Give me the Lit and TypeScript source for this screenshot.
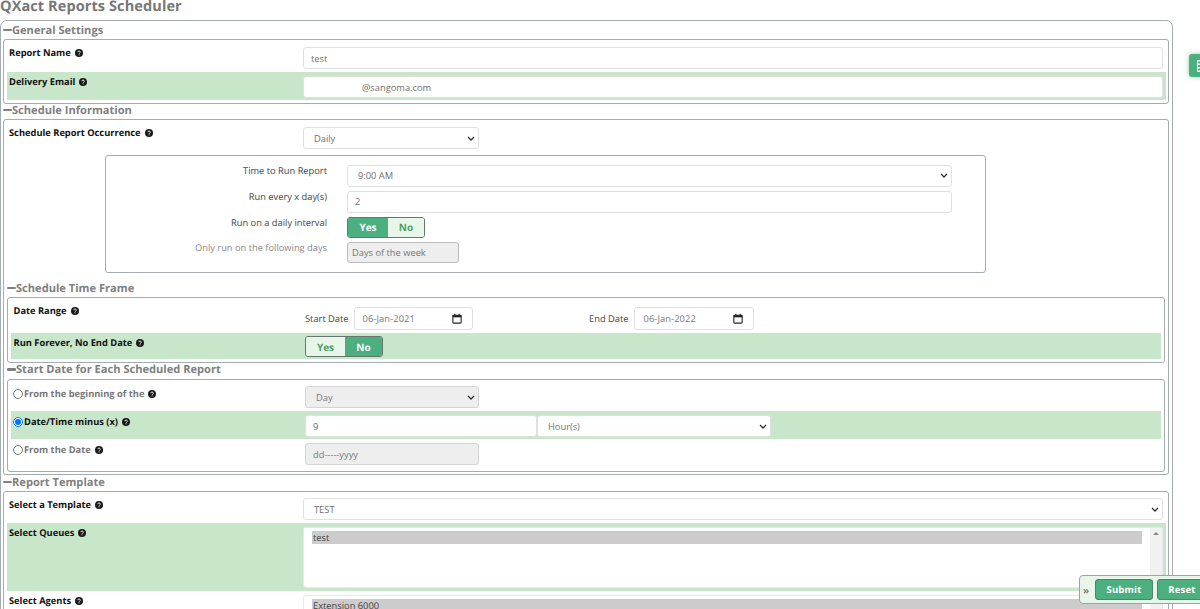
import { LitElement, html, css } from "lit";
import { customElement } from "lit/decorators.js";

const help = html`<svg class="help" viewBox="0 0 16 16"><circle cx="8" cy="8" r="8" fill="#1a1a1a"/><path d="M5.400 6.300C5.500 4.800 6.600 4 8.100 4c1.500 0 2.600.9 2.600 2.200 0 1-.6 1.500-1.300 2-.6.4-.8.7-.8 1.300" fill="none" stroke="#fff" stroke-width="1.700"/><rect x="7.100" y="10.600" width="1.900" height="1.900" fill="#fff"/></svg>`;
const cal = html`<svg class="cal" viewBox="0 0 12 12"><path d="M1 3a1 1 0 0 1 1-1h8a1 1 0 0 1 1 1v7.500a1 1 0 0 1-1 1H2a1 1 0 0 1-1-1z" fill="none" stroke="#222" stroke-width="1.300"/><rect x="1" y="2" width="10" height="2.600" fill="#222"/><rect x="2.800" y=".3" width="1.300" height="2" fill="#222"/><rect x="7.900" y=".3" width="1.300" height="2" fill="#222"/></svg>`;

@customElement("app-root")
export class AppRoot extends LitElement {
  static styles = css`
    :host { display: block; position: relative; height: 609px; overflow: hidden; background: #fff; text-rendering: geometricPrecision;
      font-family: "Open Sans", "Liberation Sans", sans-serif; font-size: 10px; color: #444; }
    * { box-sizing: border-box; }
    h1 { margin: 0; height: 20px; font-size: 14.500px; line-height: 13px; font-weight: 700; color: #777; letter-spacing: .1px; white-space: nowrap; }
    .outer { width: 1173px; height: 700px; border: 1px solid #a3abb3; border-radius: 7px; padding: 0 3.500px 0 2px; }
    .legend { display: flex; align-items: center; padding-bottom: 1px; font-size: 11.100px; font-weight: 700; color: #808080; white-space: nowrap; }
    .legend::before { content: ""; width: 9px; height: 2.500px; background: #808080; border-radius: 1px; flex: none; }
    .h18 { height: 18px; padding-bottom: 0; } .h15 { height: 15px; padding-bottom: 3px; }
    .box { border: 1px solid #a3abb3; border-radius: 3px; }
    .b1 { height: 65px; }
    .b2 { height: 356px; padding: 0 3px 0 3px; }
    .b4 { height: 200px; }
    .row { display: flex; margin: 0 1.500px 0 3px; padding: 4px 3px 2px 0; }
    .top { padding: 7px 3px 3px 0; }
    .first { margin: 0; padding-bottom: 0; }
    .tpl { padding-top: 6px; }
    .tpl .lab { margin-top: 0; }
    .green { background: #c8e6c9; }
    .lab { flex: none; width: 296px; padding-left: 2px; margin-top: -1px; display: flex; align-items: center; height: 14px; gap: 4px;
      font-size: 9.300px; font-weight: 700; color: #111; line-height: 14px; white-space: nowrap; }
    .help { width: 8px; height: 8px; flex: none; }
    .dimtext { color: #777; }
    input[type="text"], select { display: block; height: 22px; font: inherit; font-size: 9.300px; color: #707070; background-color: #fff;
      border: 1px solid #e0e0e0; border-radius: 3px; padding: 0 7px; outline: none; margin: 0; opacity: 1; }
    select { appearance: none; padding: 0 14px 0 10px;
      background-image: url("data:image/svg+xml,%3Csvg xmlns='http://www.w3.org/2000/svg' viewBox='0 0 8 5'%3E%3Cpath d='M1 1l3 3 3-3' fill='none' stroke='%23333' stroke-width='1.300'/%3E%3C/svg%3E");
      background-repeat: no-repeat; background-position: right 3px center; background-size: 8px 5px; }
    .full { flex: 1; min-width: 0; width: 100%; }
    input.email { padding-left: 58px; }
    .occ { width: 176px; }
    .panel { margin: 6px 0 0 98px; width: 881px; height: 118px; border: 1px solid #a3abb3; border-radius: 3px;
      display: grid; grid-template-columns: 221px 605px; column-gap: 20px; grid-template-rows: 22px 22px 21px 21px; row-gap: 4px; padding-top: 8.500px; align-content: start; }
    .plab { text-align: right; font-size: 9.300px; line-height: 14px; margin-top: -1px; color: #444; white-space: nowrap; }
    .plab.dim { color: #888; }
    .toggle { display: inline-flex; height: 21px; border: 1px solid #66756d; border-radius: 3px; overflow: hidden; font-size: 10px; font-weight: 700; }
    .toggle span { display: flex; align-items: center; justify-content: center; background: #e8f5e9; color: #4f9e5f; }
    .toggle span.on { background: #4caf7f; color: #fff; }
    .t1 { width: 78px; } .t2 { width: 78px; }
    .t1 span:first-child { width: 40px; } .t1 span:last-child { flex: 1; }
    .t2 span:first-child { width: 39px; } .t2 span:last-child { flex: 1; }
    input.dis, select.dis { background-color: #eee; border-color: #d4d4d4; color: #777; }
    input.days { width: 112px; padding: 0 4px; height: 21px; border-color: #bbb; }
    .l3 { height: 17px; margin-top: 7px; }
    .b3 { height: 66px; }
    .rw { display: flex; margin: 0 3px; }
    .rw .lab { width: 294px; padding-left: 2.500px; }
    .dates { padding-top: 9px; height: 34.500px; }
    .dates .lab { margin-top: -3px; }
    .date { width: 119.500px; height: 23px; border: 1px solid #e0e0e0; border-radius: 3px; display: flex; align-items: center; justify-content: space-between; padding: 0 10px 0 8px; color: #777; font-size: 9.300px; letter-spacing: .1px; }
    .cal { width: 10px; height: 11px; }
    .dl { font-size: 9.300px; color: #444; line-height: 23px; }
    .fields { display: flex; gap: 6px; }
    .start { gap: 5px; }
    .end { margin-left: 116px; }
    .forever { height: 26.500px; padding-top: 3.500px; }
    .forever .lab { margin-top: 0; }
    .l4 { height: 15.500px; padding-bottom: 3px; }
    .b5 { height: 93.500px; padding-top: 6.500px; }
    .rr { display: flex; margin: 0 3px; height: 28px; }
    .rr .lab { width: 294px; padding-left: 2px; gap: 4px; }
    .rr input[type="radio"] { width: 9.500px; height: 9.500px; margin: 0 -2.500px 0 0; flex: none; }
    .r1 { height: 25px; } .r1 .lab { margin-top: 1px; }
    .r2 { padding-top: 4px; } .r2 .lab { margin-top: 0; }
    .r3 { padding-top: 4px; } .r3 .lab { margin-top: 0; }
    .w174 { width: 174px; }
    .num { width: 232px; } .unit { width: 234px; }
    .l5 { height: 16px; padding-bottom: 2px; }
    .list { flex: 1; min-width: 0; background: #fff; border: 1px solid #e8e8e8; border-radius: 3px; height: 61px; display: flex; padding: 3px 0 0 8px; overflow: hidden; }
    .opts { flex: 1; min-width: 0; padding-right: 8px; }
    .opt { background: #ccc; height: 13px; line-height: 13px; font-size: 9.300px; color: #444; padding-left: 1px; }
    .sb { width: 12px; flex: none; margin-top: -3px; background: #f1f1f1; display: flex; justify-content: center; padding-top: 4px; }
    .sb i { width: 0; height: 0; border-left: 3px solid transparent; border-right: 3px solid transparent; border-bottom: 3px solid #888; }
    .pb3 { padding-bottom: 3px; }
    .dock { position: absolute; left: 1079px; top: 575px; width: 140px; height: 29px; background: #e8f5e9; border: 1px solid #9aa5a0; border-radius: 4px; display: flex; align-items: center; padding-left: 3px; gap: 4px; }
    .chev { width: 7px; color: #777; font-size: 10px; font-weight: 700; line-height: 1; margin-right: 1px; }
    .btn { height: 21px; background: #4caf7f; border: 1px solid #55806a; border-radius: 3px; color: #fff; font-size: 9.500px; font-weight: 700; display: flex; align-items: center; justify-content: center; letter-spacing: .2px; }
    .submit { width: 58px; } .reset { width: 50px; }
    .tab { position: absolute; left: 1189px; top: 54px; width: 20px; height: 23px; background: #4caf7f; border-radius: 3px; box-shadow: 0 0 5px rgba(76,175,127,.6); padding: 6px 0 0 8px; }
    .tab svg { display: block; width: 8px; height: 12px; }
  `;

  render() {
    return html`
      <h1>QXact Reports Scheduler</h1>
      <div class="outer">
        <div class="legend h18">General Settings</div>
        <div class="box b1">
          <div class="row top"><div class="lab">Report Name ${help}</div><input type="text" class="full" .value=${"test"} /></div>
          <div class="row green"><div class="lab">Delivery Email ${help}</div><input type="text" class="full email" .value=${"@sangoma.com"} /></div>
        </div>
        <div class="legend h15">Schedule Information</div>
        <div class="box b2">
          <div class="row top first"><div class="lab">Schedule Report Occurrence ${help}</div><select class="occ"><option>Daily</option></select></div>
          <div class="panel">
            <div class="plab">Time to Run Report</div><select class="full"><option>9:00 AM</option></select>
            <div class="plab">Run every x day(s)</div><input type="text" class="full" .value=${"2"} />
            <div class="plab">Run on a daily interval</div><div><div class="toggle t1"><span class="on">Yes</span><span>No</span></div></div>
            <div class="plab dim">Only run on the following days</div><div><input type="text" class="days dis" disabled .value=${"Days of the week"} /></div>
          </div>
          <div class="legend l3">Schedule Time Frame</div>
          <div class="box b3">
            <div class="rw dates">
              <div class="lab">Date Range ${help}</div>
              <div class="fields start"><span class="dl">Start Date</span><div class="date">06-Jan-2021 ${cal}</div></div>
              <div class="fields end"><span class="dl">End Date</span><div class="date">06-Jan-2022 ${cal}</div></div>
            </div>
            <div class="rw green forever">
              <div class="lab">Run Forever, No End Date ${help}</div>
              <div class="toggle t2"><span>Yes</span><span class="on">No</span></div>
            </div>
          </div>
          <div class="legend l4">Start Date for Each Scheduled Report</div>
          <div class="box b5">
            <div class="rr r1">
              <div class="lab"><input type="radio" name="s" /><span class="dimtext">From the beginning of the</span> ${help}</div>
              <select class="w174 dis" disabled><option>Day</option></select>
            </div>
            <div class="rr green r2">
              <div class="lab"><input type="radio" name="s" checked /><span>Date/Time minus (x)</span> ${help}</div>
              <input type="text" class="num" .value=${"9"} /><select class="unit"><option>Hour(s)</option></select>
            </div>
            <div class="rr r3">
              <div class="lab"><input type="radio" name="s" /><span class="dimtext">From the Date</span> ${help}</div>
              <input type="text" class="w174 dis" disabled .value=${"dd-----yyyy"} />
            </div>
          </div>
        </div>
        <div class="legend l5">Report Template</div>
        <div class="box b4">
          <div class="row top tpl"><div class="lab">Select a Template ${help}</div><select class="full"><option>TEST</option></select></div>
          <div class="row green pb3"><div class="lab">Select Queues ${help}</div>
            <div class="list"><div class="opts"><div class="opt">test</div></div><div class="sb"><i></i></div></div>
          </div>
          <div class="row"><div class="lab">Select Agents ${help}</div>
            <div class="list"><div class="opts"><div class="opt">Extension 6000</div></div><div class="sb"></div></div>
          </div>
        </div>
      </div>
      <div class="dock"><span class="chev">»</span><div class="btn submit">Submit</div><div class="btn reset">Reset</div></div>
      <div class="tab"><svg viewBox="0 0 8 12" fill="#fff"><path d="M0 0h8v12H0z M1 1.500v2h2v-2z M1 5v2h2V5z M1 8.500v2h2v-2z" fill-rule="evenodd"/></svg></div>
    `;
  }
}
